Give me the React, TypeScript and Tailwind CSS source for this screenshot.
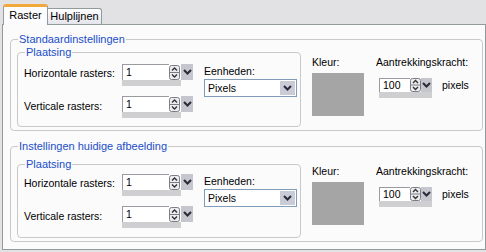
import React from 'react';

const Chevron = () => (
  <svg width="9" height="6" viewBox="0 0 9 6">
    <polyline points="1,1 4.5,4.5 8,1" fill="none" stroke="#2a2a38" strokeWidth="2" />
  </svg>
);

const SpinArrows = ({ h }: { h: number }) => {
  const mid = h / 2;
  return (
    <svg width="11" height={h} viewBox={`0 0 11 ${h}`}>
      <rect x="0.5" y="0.5" width="10" height={h - 1} rx="2" fill="#ececf0" stroke="#7c7c84" />
      <line x1="1" y1={mid} x2="10" y2={mid} stroke="#7c7c84" />
      <polyline points={`3,${mid - 2} 5.5,${mid - 4.5} 8,${mid - 2}`} fill="none" stroke="#333" strokeWidth="1.4" />
      <polyline points={`3,${mid + 2} 5.5,${mid + 4.5} 8,${mid + 2}`} fill="none" stroke="#333" strokeWidth="1.4" />
    </svg>
  );
};

// spin box with the grey strip under it
function Spin({ value, big }: { value: string; big?: boolean }) {
  if (big) {
    return (
      <div className="flex flex-col w-[71px]">
        <div className="flex h-[16px]">
          <div className="w-[47px] border-l border-t border-[#9a9aa0] bg-white pl-[3px] leading-[15px]">{value}</div>
          <div className="w-[12px] bg-white flex items-center"><SpinArrows h={15} /></div>
          <div className="w-[12px] bg-[#c6c6ce] flex items-center justify-center"><Chevron /></div>
        </div>
        <div className="h-[6px] w-[59px] bg-[#cfcfd2]" />
      </div>
    );
  }
  return (
    <div className="flex flex-col w-[53px]">
      <div className="flex h-[14px]">
        <div className="w-[31px] border-l border-t border-[#9a9aa0] bg-white pl-[3px] leading-[13px]">{value}</div>
        <div className="w-[11px] bg-white flex items-center"><SpinArrows h={14} /></div>
        <div className="w-[11px] bg-[#c6c6ce] flex items-center justify-center"><Chevron /></div>
      </div>
      <div className="h-[6px] w-[53px] bg-[#cfcfd2]" />
    </div>
  );
}

function Select() {
  return (
    <div className="w-[93px] h-[18px] border border-[#7f9db9] bg-white flex">
      <div className="flex-1 pl-[3px] leading-[16px]">Pixels</div>
      <div className="w-[15px] m-[1px] bg-[#c9cbd6] flex items-center justify-center"><Chevron /></div>
    </div>
  );
}

function Group({ title, second }: { title: string; second?: boolean }) {
  return (
    <fieldset
      className={`ml-[7px] w-[473px] border border-[#c9c9c9] rounded-[4px] ${second ? 'mt-[9px] h-[102px]' : 'mt-[8px] h-[98px]'}`}
    >
      <legend className="ml-[7px] px-[1px] leading-[13px] text-[11px] text-[#1a4ec6]">{title}</legend>
      <div className="flex items-start pl-[6px]">
        <fieldset
          className={`w-[284px] border border-[#c9c9c9] rounded-[4px] ${second ? 'mt-[5px] h-[80px]' : 'mt-0 h-[81px]'}`}
        >
          <legend className="ml-[7px] px-[1px] leading-[13px] text-[11px] text-[#1a4ec6]">Plaatsing</legend>
          <div className={`flex items-start pl-[6px] ${second ? 'pt-[3px]' : 'pt-[5px]'}`}>
            <div className="flex flex-col gap-[10px]">
              <div className="flex h-[22px]">
                <div className="w-[98px] pt-[3px] leading-[13px]">Horizontale rasters:</div>
                <Spin value="1" big />
              </div>
              <div className="flex h-[22px]">
                <div className="w-[98px] pt-[4px] leading-[13px]">Verticale rasters:</div>
                <Spin value="1" big />
              </div>
            </div>
            <div className="ml-[11px] flex flex-col">
              <div className="leading-[13px] pt-[1px]">Eenheden:</div>
              <div className="mt-[1px]"><Select /></div>
            </div>
          </div>
        </fieldset>
        <div className={`ml-[11px] flex flex-col ${second ? 'mt-[12px]' : 'mt-[10px]'}`}>
          <div className="leading-[13px]">Kleur:</div>
          <div className="mt-[4px] w-[52px] h-[43px] bg-[#a5a5a5]" />
        </div>
        <div className={`ml-[12px] flex flex-col ${second ? 'mt-[12px]' : 'mt-[10px]'}`}>
          <div className="leading-[13px]">Aantrekkingskracht:</div>
          <div className="mt-[9px] ml-[3px] flex items-start">
            <Spin value="100" />
            <div className="ml-[10px] leading-[13px] mt-[1px]">pixels</div>
          </div>
        </div>
      </div>
    </fieldset>
  );
}

export default function App() {
  return (
    <div className="w-[486px] h-[252px] bg-[#e2e2e4] text-[10.5px] text-black font-['Liberation_Sans',Arial,sans-serif] overflow-hidden">
      <div className="h-[24px] flex items-end pl-[3px]">
        <div className="relative z-10 mb-[-1px] w-[45px] h-[21px] bg-[#fcfcfe] border-x border-[#919b9c] border-t-[3px] border-t-[#f2a93b] rounded-t-[3px] flex items-center justify-center pb-[1px] text-[11px]">
          Raster
        </div>
        <div className="w-[54px] h-[16px] bg-gradient-to-b from-white to-[#e4e4ec] border-t border-r border-[#919b9c] rounded-tr-[3px] flex items-center justify-center text-[11px]">
          Hulplijnen
        </div>
      </div>
      <div className="ml-[2px] w-[484px] h-[226px] bg-[#fbfbfc] border border-[#919b9c] flex flex-col">
        <Group title="Standaardinstellingen" />
        <Group title="Instellingen huidige afbeelding" second />
      </div>
    </div>
  );
}
